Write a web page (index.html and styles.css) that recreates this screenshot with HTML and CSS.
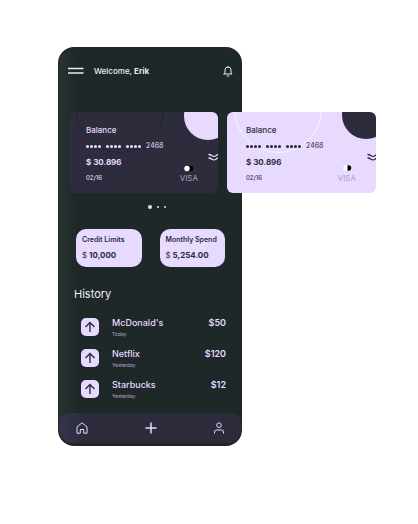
FILE: index.html
```html
<!DOCTYPE html>
<html lang="en">
<head>
<meta charset="utf-8">
<meta name="viewport" content="width=device-width, initial-scale=1">
<title>Wallet</title>
<link rel="stylesheet" href="styles.css">
</head>
<body>
<main class="phone">
  <header class="top">
    <button class="icon-btn" type="button" aria-label="Menu">
      <svg width="16" height="8" viewBox="0 0 16 8" stroke="currentColor" stroke-width="1.5"><path d="M0 1.500h15.500M0 6h15.500"/></svg>
    </button>
    <p class="welcome">Welcome, <strong>Erik</strong></p>
    <button class="icon-btn bell" type="button" aria-label="Notifications">
      <svg width="10" height="11" viewBox="0 0 10 11" fill="none" stroke="currentColor" stroke-linecap="round" stroke-linejoin="round"><path d="M1 8h8L8 6.500V4a3 3 0 0 0-6 0v2.500zM5 .5V1M4.200 10h1.600"/></svg>
    </button>
  </header>

  <section class="cards" aria-label="Cards">
    <article class="card card-dark">
      <svg class="art" width="149" height="81" viewBox="0 0 149 81" fill="none">
        <circle class="ring" cx="51" cy="-3" r="43.500"/>
        <circle class="disc" cx="139" cy="4" r="24"/>
        <path class="waves" d="M139.500 42.500q2 0 3.500 1.200 2 1.300 4 0 1-.9 2-1M139.500 46q2 0 3.500 1.200 2 1.300 4 0 1-.9 2-1"/>
        <circle cx="121.500" cy="56.500" r="2.700" fill="#000"/>
        <circle cx="118" cy="56.500" r="2.700" fill="#fff"/>
      </svg>
      <h2 class="label">Balance</h2>
      <p class="number"><span class="mask"><i></i><i></i><i></i><i></i></span><span class="mask"><i></i><i></i><i></i><i></i></span><span class="mask"><i></i><i></i><i></i><i></i></span><span>2468</span></p>
      <p class="balance">$ 30.896</p>
      <p class="foot"><span>02/16</span><span class="visa">VISA</span></p>
    </article>
    <article class="card card-light">
      <svg class="art" width="149" height="81" viewBox="0 0 149 81" fill="none">
        <circle class="ring" cx="51" cy="-3" r="43.500"/>
        <circle class="disc" cx="139" cy="3" r="24"/>
        <path class="waves" d="M140.500 42.500q2 0 3.500 1.200 2 1.300 4 0 1-.9 2-1M140.500 46q2 0 3.500 1.200 2 1.300 4 0 1-.9 2-1"/>
        <circle cx="121.500" cy="56" r="2.700" fill="#000"/>
        <path d="M120.500 53.300h-1.500a2.700 2.700 0 0 0 0 5.400h1.500z" fill="#fff"/>
      </svg>
      <h2 class="label">Balance</h2>
      <p class="number"><span class="mask"><i></i><i></i><i></i><i></i></span><span class="mask"><i></i><i></i><i></i><i></i></span><span class="mask"><i></i><i></i><i></i><i></i></span><span>2468</span></p>
      <p class="balance">$ 30.896</p>
      <p class="foot"><span>02/16</span><span class="visa">VISA</span></p>
    </article>
  </section>

  <div class="pager"><i class="on"></i><i></i><i></i></div>

  <section class="stats">
    <div class="stat"><h3>Credit Limits</h3><p><span>$</span> 10,000</p></div>
    <div class="stat"><h3>Monthly Spend</h3><p><span>$</span> 5,254.00</p></div>
  </section>

  <h2 class="history">History</h2>
  <ul class="list">
    <li><span class="arrow"><svg width="18" height="18" viewBox="0 0 18 18"><path d="M9 14V4.500M4.500 9L9 4.500 13.500 9"/></svg></span><div><h3>McDonald's</h3><p>Today</p></div><b>$50</b></li>
    <li><span class="arrow"><svg width="18" height="18" viewBox="0 0 18 18"><path d="M9 14V4.500M4.500 9L9 4.500 13.500 9"/></svg></span><div><h3>Netflix</h3><p>Yesterday</p></div><b>$120</b></li>
    <li><span class="arrow"><svg width="18" height="18" viewBox="0 0 18 18"><path d="M9 14V4.500M4.500 9L9 4.500 13.500 9"/></svg></span><div><h3>Starbucks</h3><p>Yesterday</p></div><b>$12</b></li>
  </ul>

  <nav class="tabs" aria-label="Main">
    <a href="#home" aria-label="Home"><svg width="12" height="12" viewBox="0 0 12 12"><path d="M1 5L6 .8 11 5v6.200H7.700V7.500H4.300v3.700H1z"/></svg></a>
    <a href="#add" aria-label="Add"><svg width="12" height="12" viewBox="0 0 12 12"><path class="plus" d="M6 .5v11M.5 6h11"/></svg></a>
    <a href="#profile" aria-label="Profile"><svg width="12" height="12" viewBox="0 0 12 12"><circle cx="6" cy="3.200" r="2.300"/><path d="M1.500 11.500V10A2 2 0 0 1 3.500 8h5a2 2 0 0 1 2 2v1.500"/></svg></a>
  </nav>
</main>
</body>
</html>
```
FILE: styles.css
```css
:root {
  --ink: #2c2c3c;
  --lilac: #e8daff;
  --screen: #1e2829;
}
* { box-sizing: border-box; margin: 0; padding: 0; }
body {
  background: #fff;
  padding: 47px 176px 47px 58px;
  font-family: Inter, "Open Sans", sans-serif;
  color: var(--lilac);
  overflow-x: hidden;
}
.phone {
  min-width: 184px;
  border: solid #252526;
  border-width: 3px 1px;
  border-radius: 16px;
  background: linear-gradient(90deg, #273233, var(--screen) 18px);
}
.top {
  display: flex;
  align-items: center;
  height: 42px;
  padding: 0 8px 0 9px;
  color: #eeeaf3;
}
.icon-btn {
  display: flex;
  border: 0;
  background: none;
  color: inherit;
}
.bell { margin-left: auto; }
.welcome { margin-left: 10px; font-size: 8px; font-weight: 500; white-space: nowrap; }
.welcome strong { font-weight: 700; }

.cards {
  display: flex;
  gap: 9px;
  margin: 20px 0 0 10px;
}
.card {
  position: relative;
  flex: 0 0 149px;
  padding: 10px 20px 7px 17px;
  border-radius: 6px;
  overflow: hidden;
  line-height: 16px;
}
.card-dark { background: var(--ink); color: var(--lilac); }
.card-light { padding-left: 19px; background: var(--lilac); color: var(--ink); }
.art { position: absolute; top: 0; left: 0; }
.label, .number, .balance, .foot { position: relative; }
.ring { stroke: #20292d; }
.disc { fill: var(--lilac); }
.waves { stroke: currentColor; stroke-width: 1.3; }
.card-light .ring { stroke: #f8f3ff; }
.card-light .disc { fill: var(--ink); }
.label { font-size: 8px; font-weight: 500; }
.number { display: flex; align-items: center; gap: 5px; font-size: 7px; }
.mask { display: flex; gap: 1px; }
.mask i { width: 3px; height: 3px; border-radius: 50%; background: currentColor; }
.balance { font-size: 8px; font-weight: 700; }
.foot { display: flex; justify-content: space-between; font-size: 6px; font-weight: 500; }
.visa { font-size: 8px; font-weight: 400; color: #a9a0bd; }

.pager {
  display: flex;
  justify-content: center;
  align-items: center;
  gap: 5px;
  height: 4px;
  margin: 12px 0 20px 14px;
}
.pager i { width: 2px; height: 2px; border-radius: 50%; background: var(--lilac); }
.pager .on { width: 4px; height: 4px; }

.stats {
  display: grid;
  grid-template-columns: 1fr 1fr;
  gap: 18px;
  padding: 0 16px 0 17px;
}
.stat {
  height: 38px;
  padding: 4px 0 4px 6px;
  border-radius: 10px;
  background: var(--lilac);
  color: var(--ink);
  white-space: nowrap;
}
.stat h3 { font-size: 7px; font-weight: 600; line-height: 14px; }
.stat p { font-size: 8px; font-weight: 700; line-height: 16px; }
.stat span { font-weight: 400; }

.history {
  margin: 19px 15px 14px;
  font-size: 11px;
  font-weight: 400;
  line-height: 16px;
  color: #f2eef7;
}
.list { display: grid; gap: 9px; padding: 0 15px 0 22px; list-style: none; }
.list li { display: flex; height: 22px; }
.arrow { display: flex; align-items: center; margin-right: 13px; }
.arrow svg {
  border-radius: 5px;
  background: var(--lilac);
  fill: none;
  stroke: var(--ink);
  stroke-width: 1.4;
}
.list h3 { font-size: 9px; font-weight: 500; line-height: 14px; }
.list p { font-size: 5px; line-height: 8px; color: #b3a9c4; }
.list b { margin-left: auto; font-size: 9px; font-weight: 600; line-height: 14px; }

.tabs {
  display: flex;
  justify-content: space-between;
  align-items: center;
  height: 30px;
  margin-top: 13px;
  padding: 0 16px 0 17px;
  border-radius: 10px 10px 14px 14px;
  background: linear-gradient(90deg, #33344a, var(--ink) 24px);
  color: var(--lilac);
}
.tabs a { display: flex; color: inherit; }
.tabs svg { fill: none; stroke: currentColor; stroke-linejoin: round; }
.tabs .plus { stroke-width: 1.5; }
```
